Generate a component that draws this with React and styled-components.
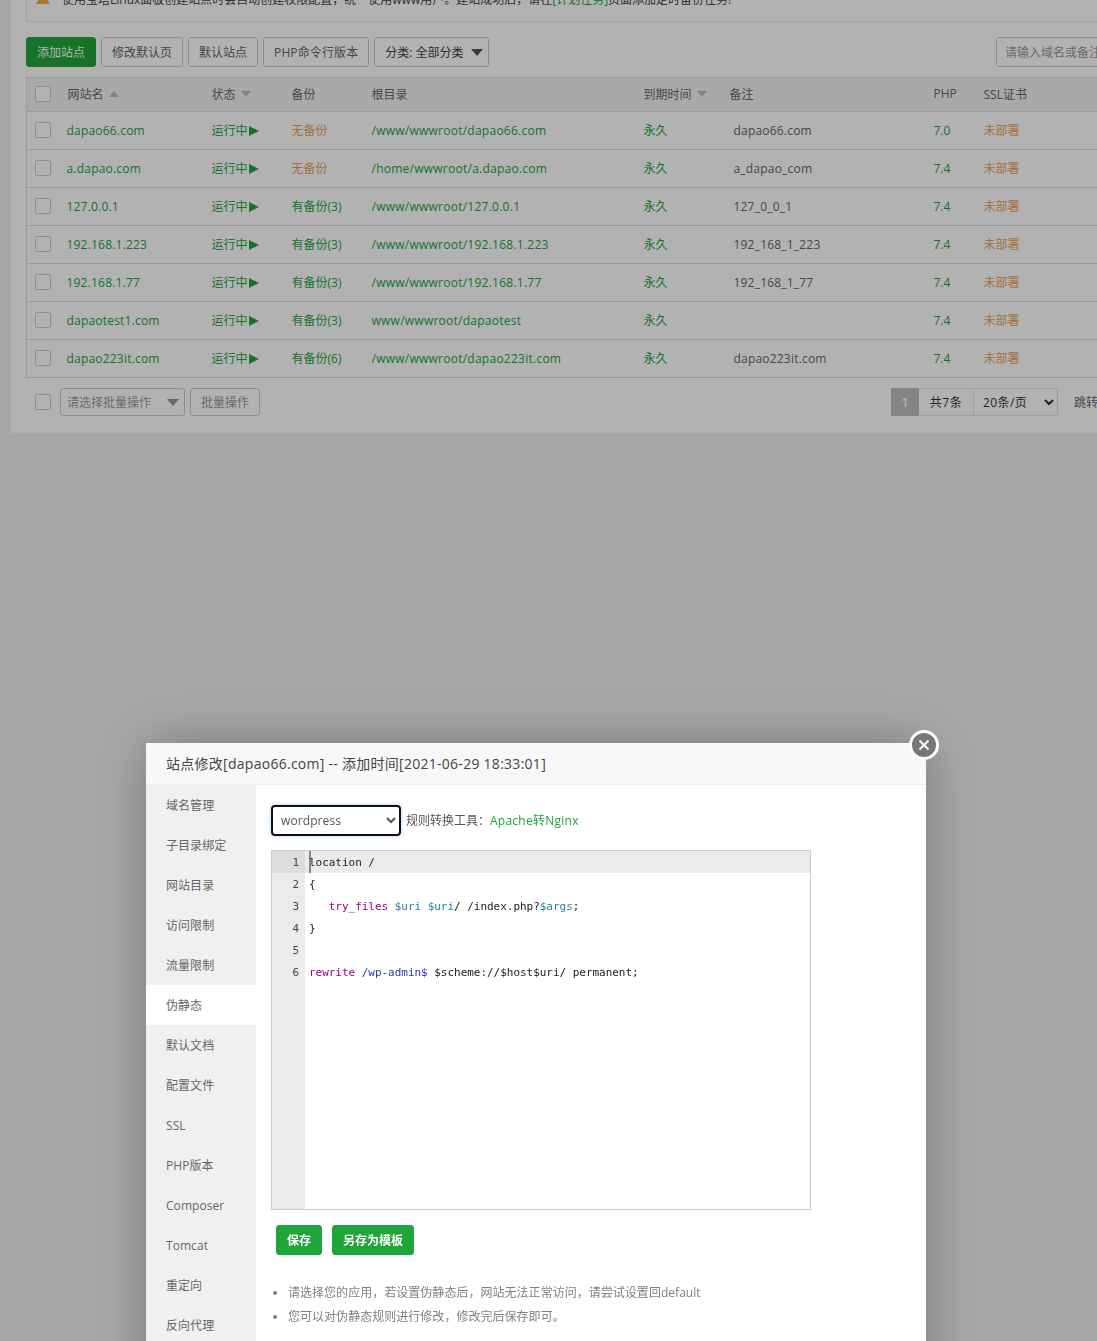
import React from 'react';
import styled, { createGlobalStyle } from 'styled-components';

const sites = [
    { name: 'dapao66.com', backup: '无备份', root: '/www/wwwroot/dapao66.com', remark: 'dapao66.com', php: '7.0' },
    { name: 'a.dapao.com', backup: '无备份', root: '/home/wwwroot/a.dapao.com', remark: 'a_dapao_com', php: '7.4' },
    { name: '127.0.0.1', backup: '有备份(3)', root: '/www/wwwroot/127.0.0.1', remark: '127_0_0_1', php: '7.4' },
    { name: '192.168.1.223', backup: '有备份(3)', root: '/www/wwwroot/192.168.1.223', remark: '192_168_1_223', php: '7.4' },
    { name: '192.168.1.77', backup: '有备份(3)', root: '/www/wwwroot/192.168.1.77', remark: '192_168_1_77', php: '7.4' },
    { name: 'dapaotest1.com', backup: '有备份(3)', root: 'www/wwwroot/dapaotest', remark: '', php: '7.4' },
    { name: 'dapao223it.com', backup: '有备份(6)', root: '/www/wwwroot/dapao223it.com', remark: 'dapao223it.com', php: '7.4' },
];

const menu = ['域名管理', '子目录绑定', '网站目录', '访问限制', '流量限制', '伪静态', '默认文档', '配置文件', 'SSL', 'PHP版本', 'Composer', 'Tomcat', '重定向', '反向代理'];

const code = [
    [['plain', 'location /']],
    [['plain', '{']],
    [['plain', '   '], ['keyword', 'try_files'], ['plain', ' '], ['variable', '$uri'], ['plain', ' '], ['variable', '$uri'], ['plain', '/ /index.php?'], ['variable', '$args'], ['plain', ';']],
    [['plain', '}']],
    [],
    [['keyword', 'rewrite'], ['plain', ' '], ['path', '/wp-admin$'], ['plain', ' $scheme://$host$uri/ permanent;']],
];

const tokenColors = { plain: '#222', keyword: '#908', variable: '#27829c', path: '#3333bb' };
const orange = '#ea9f55';

const GlobalStyle = createGlobalStyle`
    html, body {
        margin: 0;
        overflow: hidden;
        height: 100%;
        background: #f0f0f0;
        font-family: "Open Sans", "Noto Sans CJK SC", sans-serif;
        font-size: 12px;
        color: #666;
    }
`;

const Card = styled.div`
    width: 1200px;
    box-sizing: border-box;
    margin: -20px 0 0 11px;
    padding: 0 15px 17px;
    background: #fff;
`;

const Alert = styled.div`
    display: flex;
    align-items: center;
    gap: 12px;
    height: 42px;
    box-sizing: border-box;
    padding: 0 0 4px 9px;
    border: 1px solid #e8e8e8;
    color: #444;
    white-space: nowrap;
`;

const AlertIcon = styled.svg`
    margin-bottom: 4px;
`;

const AlertLink = styled.span`
    color: #20a53a;
`;

const Toolbar = styled.div`
    display: flex;
    gap: 5px;
    margin: 15px 0 10px;
`;

const Button = styled.button`
    height: 30px;
    padding: 0 10px;
    border: 1px solid ${p => (p.$primary ? '#20a53a' : '#ccc')};
    border-radius: 3px;
    background: ${p => (p.$primary ? '#20a53a' : '#fff')};
    color: ${p => (p.$primary ? '#fff' : '#666')};
    font: inherit;
    white-space: nowrap;
`;

const PhpButton = styled(Button)`
    letter-spacing: 0.12px;
`;

const CategoryButton = styled(Button)`
    display: flex;
    align-items: center;
    gap: 7px;
    padding-right: 5px;
    color: #444;
`;

const Caret = styled.i`
    display: inline-block;
    width: 0;
    height: 0;
    border-left: 6px solid transparent;
    border-right: 6px solid transparent;
    border-top: 7px solid ${p => p.$color || '#555'};
`;

const SortUp = styled.i`
    display: inline-block;
    width: 0;
    height: 0;
    margin-left: 5px;
    vertical-align: 2px;
    border-left: 5px solid transparent;
    border-right: 5px solid transparent;
    border-bottom: 6px solid #bbb;
`;

const SortDown = styled(SortUp)`
    border-bottom: 0;
    border-top: 6px solid #bbb;
`;

const Search = styled.input`
    width: 200px;
    height: 30px;
    box-sizing: border-box;
    margin-left: auto;
    padding: 0 8px;
    border: 1px solid #ccc;
    border-radius: 3px;
    font: inherit;
    &::placeholder { color: #999; }
`;

const Table = styled.table`
    width: 1170px;
    table-layout: fixed;
    border-collapse: collapse;
    border: 1px solid #ddd;
`;

const Head = styled.th`
    box-sizing: border-box;
    height: 34px;
    padding: 0 0 2px ${p => (p.$check ? 0 : 10)}px;
    background: #f2f2f2;
    border-bottom: 1px solid #ddd;
    color: #666;
    font-weight: 400;
    text-align: left;
    white-space: nowrap;
`;

const Cell = styled.td`
    box-sizing: border-box;
    height: 38px;
    padding: 0 0 ${p => (p.$raise ? 2 : 0)}px ${p => p.$pad ?? 10}px;
    border-bottom: 1px solid #ddd;
    color: ${p => p.$color || '#20a53a'};
    letter-spacing: ${p => p.$spacing || 0}px;
    white-space: nowrap;
`;

const Check = styled.span`
    display: block;
    width: 16px;
    height: 16px;
    box-sizing: border-box;
    margin-left: ${p => (p.$flush ? 9 : 8)}px;
    border: 1px solid #ccc;
    border-radius: 2px;
    background: #fff;
`;

const Play = styled.i`
    display: inline-block;
    width: 0;
    height: 0;
    margin-left: 1px;
    vertical-align: -1px;
    border-top: 5.5px solid transparent;
    border-bottom: 5.5px solid transparent;
    border-left: 10px solid #20a53a;
`;

const TableFooter = styled.div`
    display: flex;
    align-items: center;
    margin-top: 10px;
`;

const BatchSelect = styled.div`
    display: flex;
    align-items: center;
    justify-content: space-between;
    width: 125px;
    height: 28px;
    box-sizing: border-box;
    margin-left: 9px;
    padding: 0 5px 0 6px;
    border: 1px solid #ccc;
    border-radius: 3px;
    color: #999;
`;

const BatchButton = styled.div`
    display: flex;
    align-items: center;
    height: 28px;
    box-sizing: border-box;
    margin-left: 5px;
    padding: 0 10px;
    border: 1px solid #ccc;
    border-radius: 3px;
    color: #999;
`;

const Pager = styled.div`
    display: flex;
    align-items: center;
    height: 28px;
    margin-left: auto;
    color: #333;
`;

const PageNumber = styled.span`
    display: flex;
    align-items: center;
    justify-content: center;
    width: 28px;
    height: 28px;
    background: #bebebe;
    color: #fff;
    font-size: 13px;
    font-weight: 600;
`;

const PageTotal = styled.span`
    display: flex;
    align-items: center;
    justify-content: center;
    width: 55px;
    height: 28px;
    box-sizing: border-box;
    border: 1px solid #e4e4e4;
    border-left: 0;
    letter-spacing: 0.5px;
    white-space: nowrap;
`;

const PageSize = styled.select`
    width: 84px;
    height: 28px;
    padding-left: 5px;
    border: 1px solid #e4e4e4;
    border-left: 0;
    border-radius: 0;
    background: #fff;
    color: #333;
    font: inherit;
    letter-spacing: 0.4px;
`;

const Jump = styled.span`
    width: 122px;
    margin-left: 16px;
    color: #666;
`;

const Overlay = styled.div`
    position: fixed;
    inset: 0;
    background: rgba(0, 0, 0, 0.3);
`;

const Modal = styled.div`
    position: fixed;
    top: 743px;
    left: 146px;
    width: 780px;
    height: 700px;
    background: #fff;
    box-shadow: 1px 1px 50px rgba(0, 0, 0, 0.3);
`;

const Close = styled.div`
    position: absolute;
    top: -13px;
    right: -13px;
    display: flex;
    align-items: center;
    justify-content: center;
    width: 30px;
    height: 30px;
    box-sizing: border-box;
    border: 3px solid #fff;
    border-radius: 50%;
    background: #777;
`;

const ModalTitle = styled.div`
    height: 42px;
    box-sizing: border-box;
    padding-left: 20px;
    border-bottom: 1px solid #eee;
    background: #f8f8f8;
    color: #444;
    font-size: 14px;
    letter-spacing: 0.27px;
    line-height: 41px;
`;

const ModalBody = styled.div`
    display: flex;
    height: 658px;
`;

const Sidebar = styled.div`
    width: 110px;
    flex: none;
    background: #f0f0f0;
`;

const MenuItem = styled.div`
    height: 40px;
    padding-left: 20px;
    background: ${p => (p.$active ? '#fff' : 'transparent')};
    color: #666;
    letter-spacing: 0.06px;
    line-height: 42px;
`;

const Content = styled.div`
    flex: 1;
    padding: 20px 15px;
`;

const RuleRow = styled.div`
    display: flex;
    align-items: center;
    gap: 5px;
    margin-bottom: 14px;
    color: #555;
`;

const RuleSelect = styled.select`
    width: 130px;
    height: 31px;
    padding-left: 4px;
    border: 2px solid #111;
    border-radius: 4px;
    outline: 0;
    box-shadow: 0 0 4px rgba(102, 175, 233, 0.6);
    background: #fff;
    color: #555;
    font: inherit;
    letter-spacing: 0.1px;
`;

const RuleText = styled.span`
    margin-bottom: 2px;
`;

const RuleLink = styled.span`
    color: #20a53a;
    letter-spacing: 0.25px;
`;

const Editor = styled.div`
    display: flex;
    width: 540px;
    height: 360px;
    box-sizing: border-box;
    border: 1px solid #ccc;
    font-family: "DejaVu Sans Mono", "Liberation Mono", monospace;
    font-size: 11px;
    line-height: 23px;
`;

const Gutter = styled.div`
    width: 33px;
    flex: none;
    background: #ebebeb;
    color: #444;
`;

const LineNumber = styled.div`
    height: 22px;
    padding-right: 6px;
    background: ${p => (p.$active ? '#dcdcdc' : 'transparent')};
    text-align: right;
`;

const Lines = styled.div`
    flex: 1;
`;

const Line = styled.div`
    height: 22px;
    padding-left: 4px;
    background: ${p => (p.$active ? '#ebebeb' : 'transparent')};
    letter-spacing: -0.03px;
    white-space: pre;
`;

const Cursor = styled.i`
    display: inline-block;
    width: 0;
    height: 22px;
    margin-right: -2px;
    vertical-align: top;
    border-left: 2px solid #888;
`;

const Token = styled.span`
    color: ${p => tokenColors[p.$kind]};
`;

const Actions = styled.div`
    display: flex;
    gap: 10px;
    margin: 15px 0 26px 5px;
`;

const SaveButton = styled(Button)`
    font-weight: 700;
`;

const Tips = styled.ul`
    margin: 0;
    padding: 0 0 0 17px;
    color: #808080;
    letter-spacing: 0.03px;
    line-height: 24px;
`;

function App() {
    return (
        <>
            <GlobalStyle />
            <Card>
                <Alert>
                    <AlertIcon width="14" height="13" viewBox="0 0 14 13"><path d="M7 0 14 13H0Z" fill="#f0ad4e" /></AlertIcon>
                    <span>使用宝塔Linux面板创建站点时会自动创建权限配置，统一使用www用户。建站成功后，请在<AlertLink>[计划任务]</AlertLink>页面添加定时备份任务!</span>
                </Alert>
                <Toolbar>
                    <Button $primary>添加站点</Button>
                    <Button>修改默认页</Button>
                    <Button>默认站点</Button>
                    <PhpButton>PHP命令行版本</PhpButton>
                    <CategoryButton>分类: 全部分类 <Caret /></CategoryButton>
                    <Search placeholder="请输入域名或备注" />
                </Toolbar>
                <Table>
                    <colgroup>
                        <col width="31" /><col width="144" /><col width="80" /><col width="80" />
                        <col width="272" /><col width="86" /><col width="204" /><col width="50" /><col />
                    </colgroup>
                    <thead>
                        <tr>
                            <Head $check><Check /></Head>
                            <Head>网站名<SortUp /></Head>
                            <Head>状态<SortDown /></Head>
                            <Head>备份</Head>
                            <Head>根目录</Head>
                            <Head>到期时间<SortDown /></Head>
                            <Head>备注</Head>
                            <Head>PHP</Head>
                            <Head>SSL证书</Head>
                        </tr>
                    </thead>
                    <tbody>
                        {sites.map(site => (
                            <tr key={site.name}>
                                <Cell $pad={0} $raise><Check /></Cell>
                                <Cell $pad={9} $spacing={0.2}>{site.name}</Cell>
                                <Cell $raise>运行中<Play /></Cell>
                                <Cell $raise $color={site.backup === '无备份' ? orange : undefined}>{site.backup}</Cell>
                                <Cell $spacing={0.25}>{site.root}</Cell>
                                <Cell $raise>永久</Cell>
                                <Cell $pad={14} $spacing={0.2} $color="#666">{site.remark}</Cell>
                                <Cell>{site.php}</Cell>
                                <Cell $raise $color={orange}>未部署</Cell>
                            </tr>
                        ))}
                    </tbody>
                </Table>
                <TableFooter>
                    <Check $flush />
                    <BatchSelect>请选择批量操作 <Caret $color="#999" /></BatchSelect>
                    <BatchButton>批量操作</BatchButton>
                    <Pager>
                        <PageNumber>1</PageNumber>
                        <PageTotal>共7条</PageTotal>
                        <PageSize defaultValue="20">
                            <option value="20">20条/页</option>
                        </PageSize>
                        <Jump>跳转</Jump>
                    </Pager>
                </TableFooter>
            </Card>
            <Overlay />
            <Modal>
                <Close>
                    <svg width="12" height="12" viewBox="0 0 12 12"><path d="M1.5 1.5 10.5 10.5M10.5 1.5 1.5 10.5" stroke="#fff" strokeWidth="2" /></svg>
                </Close>
                <ModalTitle>站点修改[dapao66.com] -- 添加时间[2021-06-29 18:33:01]</ModalTitle>
                <ModalBody>
                    <Sidebar>
                        {menu.map(item => <MenuItem key={item} $active={item === '伪静态'}>{item}</MenuItem>)}
                    </Sidebar>
                    <Content>
                        <RuleRow>
                            <RuleSelect defaultValue="wordpress">
                                <option value="wordpress">wordpress</option>
                            </RuleSelect>
                            <RuleText>规则转换工具：<RuleLink>Apache转Nginx</RuleLink></RuleText>
                        </RuleRow>
                        <Editor>
                            <Gutter>
                                {code.map((_, i) => <LineNumber key={i} $active={i === 0}>{i + 1}</LineNumber>)}
                            </Gutter>
                            <Lines>
                                {code.map((tokens, i) => (
                                    <Line key={i} $active={i === 0}>
                                        {i === 0 && <Cursor />}
                                        {tokens.map(([kind, text], j) => <Token key={j} $kind={kind}>{text}</Token>)}
                                    </Line>
                                ))}
                            </Lines>
                        </Editor>
                        <Actions>
                            <SaveButton $primary>保存</SaveButton>
                            <SaveButton $primary>另存为模板</SaveButton>
                        </Actions>
                        <Tips>
                            <li>请选择您的应用，若设置伪静态后，网站无法正常访问，请尝试设置回default</li>
                            <li>您可以对伪静态规则进行修改，修改完后保存即可。</li>
                        </Tips>
                    </Content>
                </ModalBody>
            </Modal>
        </>
    );
}

export default App;
